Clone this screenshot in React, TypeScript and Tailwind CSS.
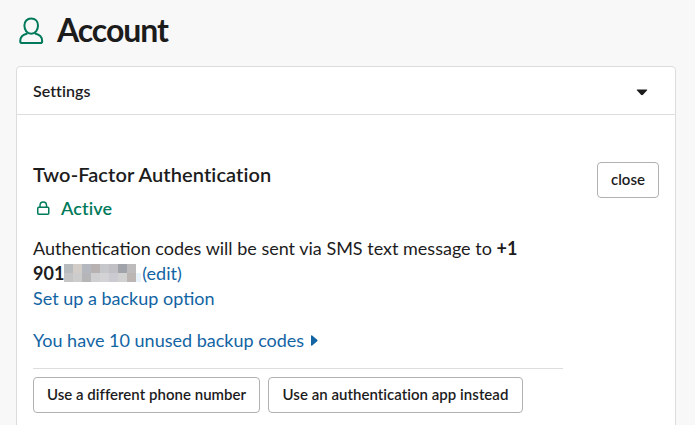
const MOSAIC_TOP = ['#b8bbbd', '#d2cdc9', '#b5b7bf', '#b7b1b1', '#c6c7cb', '#c1c1c5', '#a0a3aa', '#bdbbbc'];
const MOSAIC_BOTTOM = ['#c4c4c4', '#cccccd', '#b6b5b8', '#cfced0', '#d3d3d5', '#cacad0', '#d2d1d1', '#bbb6b4'];

function PersonIcon() {
  return (
    <svg className="h-7 w-[26px]" viewBox="0 0 26 28" fill="none" stroke="#007a5a" strokeWidth="2">
      <path d="M13.200 1.500c4.200 0 6.800 2.900 6.800 7 0 4.500-2.700 8.200-6.800 8.200s-6.800-3.700-6.800-8.200c0-4.100 2.600-7 6.800-7Z" />
      <path d="M9.400 16.600C5 17.500 2.200 20.300 2.200 24.300c0 1.200.6 1.800 1.700 1.800h18.600c1.100 0 1.700-.6 1.700-1.800 0-4-2.800-6.800-7.200-7.700" />
    </svg>
  );
}

function LockIcon() {
  return (
    <svg className="h-[15px] w-[14px]" viewBox="0 0 14 15" fill="none" stroke="#007a5a" strokeWidth="1.5">
      <rect x="1.750" y="6.250" width="11" height="7" rx="1" />
      <path d="M4 6V4.500C4 2.300 5.300 1 7.250 1s3.250 1.300 3.250 3.500V6" />
    </svg>
  );
}

function Button({ children, className }: { children: string; className: string }) {
  return (
    <button className={`h-9 shrink-0 whitespace-nowrap rounded border border-[#b1b1b3] bg-white pb-[2px] text-[15px] font-semibold tracking-[0.03px] ${className}`}>
      {children}
    </button>
  );
}

export default function App() {
  return (
    <div className="h-[425px] w-[695px] overflow-hidden bg-[#f8f8f8] pl-4 font-['Lato','Noto_Sans',sans-serif] text-[#1d1c1d]">
      <header className="flex h-[66px] items-start pl-[2px] pt-[17px]">
        <PersonIcon />
        <h1 className="-mt-[7px] ml-[13px] text-[32px] font-bold leading-[40px] tracking-[-1.05px]">Account</h1>
      </header>
      <section className="h-[380px] w-[660px] rounded-t border border-[#dddddd] bg-white">
        <div className="flex h-12 items-center justify-between border-b border-[#dddddd] pl-4 pr-[27px]">
          <h2 className="pt-px text-[16px] font-semibold tracking-[0.05px]">Settings</h2>
          <svg className="mt-[3px] h-[7px] w-3" viewBox="0 0 12 7" fill="#1d1c1d">
            <path d="M1.500.5h9c.8 0 .9.6.4 1.100L7 5.800c-.6.6-1.400.6-2 0L1.100 1.600C.6 1.100.7.5 1.500.5Z" />
          </svg>
        </div>
        <div className="flex items-start justify-between px-4 pt-[47px]">
          <div className="w-[530px] text-[18px] leading-[26px]">
            <h3 className="-mt-px text-[20px] font-semibold leading-[26px] tracking-[0.1px]">Two-Factor Authentication</h3>
            <div className="mt-2 flex h-[26px] items-center pl-[3px] font-semibold text-[#007a5a]">
              <LockIcon />
              <span className="ml-[11px] tracking-[0.1px]">Active</span>
            </div>
            <p className="mt-[14px] whitespace-nowrap">
              Authentication codes will be sent via SMS text message to <strong className="font-bold">+1</strong>
            </p>
            <div className="-mt-px flex h-[25px] items-center">
              <strong className="font-bold">901</strong>
              <div className="grid h-[18px] w-[72px] grid-cols-8 grid-rows-2">
                {[...MOSAIC_TOP, ...MOSAIC_BOTTOM].map((color, i) => (
                  <i key={i} style={{ backgroundColor: color }} />
                ))}
              </div>
              <i className="mr-px mt-[9px] h-[9px] w-[5px] bg-[#e8f2fb]" />
              <a className="text-[#1264a3]">(edit)</a>
            </div>
            <p className="text-[#1264a3]">Set up a backup option</p>
            <p className="mt-4 flex items-center text-[#1264a3]">
              You have 10 unused backup codes
              <svg className="ml-[7px] mt-px h-[11px] w-[7px]" viewBox="0 0 7 11" fill="#1264a3">
                <path d="M0 1C0 .2.6 0 1.200.6l5 4.200c.5.4.5 1 0 1.400l-5 4.200C.6 11 0 10.800 0 10Z" />
              </svg>
            </p>
            <div className="mt-[15px] flex gap-2 border-t border-[#dddddd] pt-2">
              <Button className="w-[227px]">Use a different phone number</Button>
              <Button className="w-[255px]">Use an authentication app instead</Button>
            </div>
          </div>
          <Button className="w-[62px]">close</Button>
        </div>
      </section>
    </div>
  );
}
